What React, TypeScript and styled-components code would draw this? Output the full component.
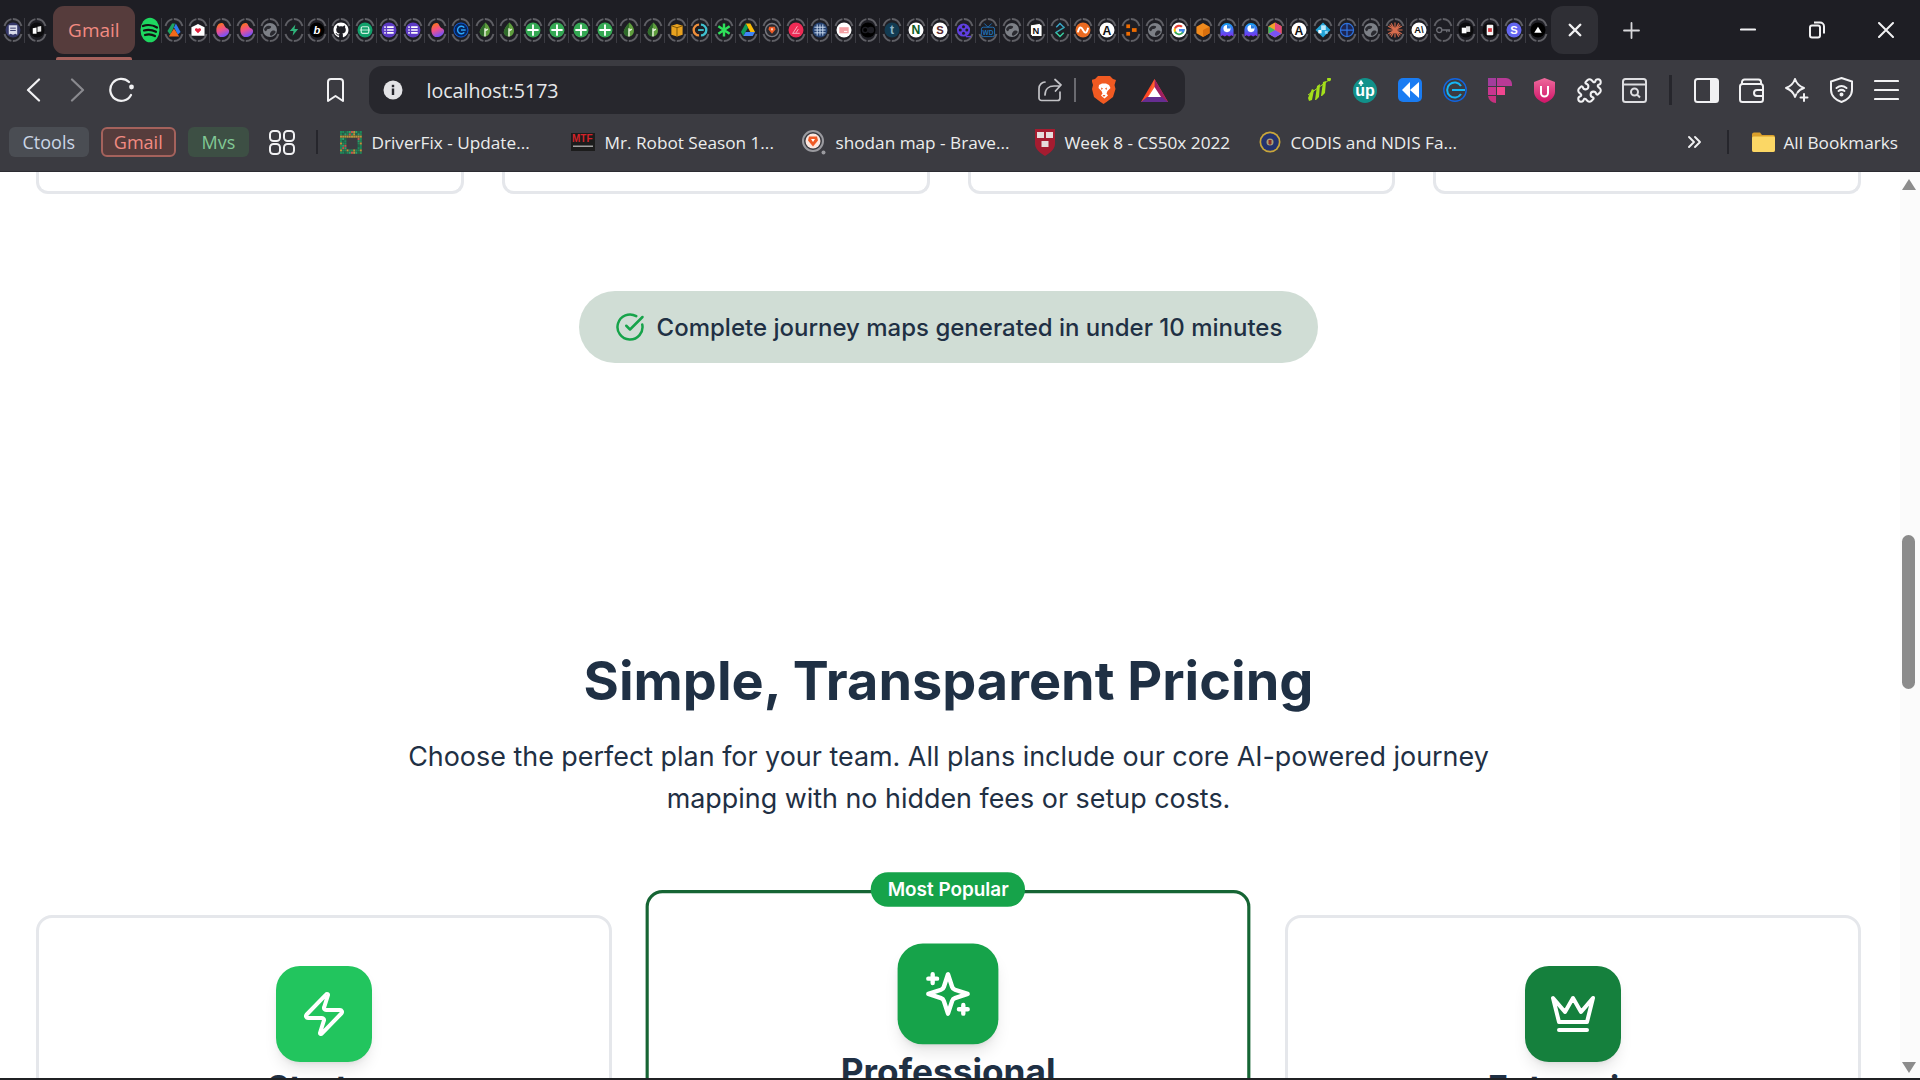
import React from "react";
import styled, { createGlobalStyle } from "styled-components";
import { Zap, CircleCheckBig, Puzzle } from "lucide-react";

const Global = createGlobalStyle`
  html, body { margin: 0; padding: 0; overflow: hidden; background: #fff; }
  #root { width: 1920px; height: 1080px; }
  * { box-sizing: border-box; }
`;

const Shell = styled.div`
  width: 1920px;
  height: 1080px;
  display: flex;
  flex-direction: column;
  overflow: hidden;
  font-family: "Open Sans", "Noto Sans", sans-serif;
`;

/* ---------- tab strip ---------- */
const TabStrip = styled.div`
  height: 60px;
  flex: none;
  display: flex;
  align-items: flex-start;
  padding-left: 1px;
  background: #1e1e24;
`;
const TabSlot = styled.div<{ $sep: boolean }>`
  position: relative;
  width: 23.94px;
  height: 60px;
  flex: none;
  display: flex;
  align-items: center;
  justify-content: center;
  &::after {
    content: "";
    display: ${(p) => (p.$sep ? "block" : "none")};
    position: absolute;
    right: 0;
    top: 18px;
    width: 1px;
    height: 25px;
    background: #3b3b42;
  }
`;
const ActiveTab = styled.div`
  position: relative;
  width: 82px;
  height: 48px;
  margin: 6px 3px 0 4px;
  flex: none;
  display: flex;
  align-items: center;
  justify-content: center;
  border-radius: 11px;
  background: #563c3c;
  color: #f28b82;
  font-size: 19px;
  font-weight: 500;
  &::after {
    content: "";
    position: absolute;
    left: 3px;
    right: 3px;
    bottom: -6px;
    height: 3px;
    border-radius: 2px 2px 0 0;
    background: #a5625c;
  }
`;
const CloseTab = styled.div`
  width: 47px;
  height: 48px;
  margin: 6px 0 0 1px;
  flex: none;
  display: flex;
  align-items: center;
  justify-content: center;
  border-radius: 12px;
  background: #2f2f35;
`;
const NewTab = styled.div`
  width: 24px;
  height: 60px;
  margin-left: 21px;
  display: flex;
  align-items: center;
  justify-content: center;
`;
const WindowControls = styled.div`
  margin-left: auto;
  display: flex;
`;
const WindowButton = styled.div`
  width: 69px;
  height: 60px;
  display: flex;
  align-items: center;
  justify-content: center;
`;

/* ---------- toolbar ---------- */
const Toolbar = styled.div`
  height: 60px;
  flex: none;
  display: flex;
  align-items: center;
  padding-left: 11px;
  background: #3b3b41;
`;
const ToolButton = styled.div<{ $w?: number; $ml?: number }>`
  width: ${(p) => p.$w ?? 45}px;
  height: 48px;
  margin-left: ${(p) => p.$ml ?? 0}px;
  flex: none;
  display: flex;
  align-items: center;
  justify-content: center;
`;
const Address = styled.div`
  width: 816px;
  height: 48px;
  margin-left: 12px;
  flex: none;
  display: flex;
  align-items: center;
  padding: 0 17px 0 14px;
  border-radius: 13px;
  background: #27272d;
`;
const UrlText = styled.span`
  margin-left: 23.5px;
  color: #e6e7ea;
  font-size: 19.6px;
`;
const AddressEnd = styled.div`
  margin-left: auto;
  display: flex;
  align-items: center;
`;
const ThinRule = styled.div<{ $h: number; $c: string; $w?: number }>`
  width: ${(p) => p.$w ?? 2}px;
  height: ${(p) => p.$h}px;
  flex: none;
  background: ${(p) => p.$c};
`;
const RuleBox = styled.div<{ $w?: number }>`
  width: ${(p) => p.$w ?? 25}px;
  display: flex;
  justify-content: center;
  flex: none;
`;

/* ---------- bookmarks ---------- */
const BookmarksBar = styled.div`
  height: 52px;
  flex: none;
  display: flex;
  align-items: center;
  padding: 0 0 7px 9px;
  border-bottom: 1px solid #2c2c32;
  background: #3b3b41;
  color: #eceded;
  font-size: 17.2px;
`;
const Chip = styled.div<{ $w: number; $bg: string; $fg: string; $line?: string }>`
  width: ${(p) => p.$w}px;
  height: 30px;
  margin-right: 12.5px;
  flex: none;
  display: flex;
  align-items: center;
  justify-content: center;
  border-radius: 6px;
  border: ${(p) => (p.$line ? `2px solid ${p.$line}` : "none")};
  background: ${(p) => p.$bg};
  color: ${(p) => p.$fg};
  font-size: 18px;
  font-weight: 500;
`;
const AppsButton = styled.div`
  width: 26px;
  margin-left: 7px;
  display: flex;
  flex: none;
`;
const BarRuleA = styled.div`
  margin-left: 21px;
  margin-right: 22px;
  flex: none;
  display: flex;
`;
const BookmarkItem = styled.div<{ $w: number }>`
  width: ${(p) => p.$w}px;
  flex: none;
  display: flex;
  align-items: center;
  gap: 10px;
  white-space: nowrap;
`;
const BarEnd = styled.div`
  margin-left: auto;
  padding-right: 22px;
  display: flex;
  align-items: center;
`;
const MoreButton = styled.div`
  color: #eceded;
  width: 20px;
  display: flex;
  justify-content: center;
  margin-right: 23px;
`;
const AllMarks = styled.div`
  margin-left: 23px;
  display: flex;
  align-items: center;
  gap: 8px;
`;

/* ---------- page ---------- */
const Page = styled.div`
  flex: 1;
  min-height: 0;
  display: flex;
  background: #fff;
`;
const Content = styled.main`
  flex: 1;
  min-width: 0;
  padding: 0 39px 0 36px;
  overflow: hidden;
  display: flex;
  flex-direction: column;
  align-items: center;
  font-family: Inter, "Liberation Sans", sans-serif;
  color: #1f3044;
`;
const FeatureRow = styled.div`
  width: 100%;
  flex: none;
  display: grid;
  grid-template-columns: repeat(4, 1fr);
  gap: 38px;
`;
const FeatureStub = styled.div`
  height: 22px;
  border: 3px solid #e5e7eb;
  border-top: none;
  border-radius: 0 0 12px 12px;
`;
const Pill = styled.div`
  height: 72px;
  margin-top: 97px;
  padding: 0 36px;
  flex: none;
  display: flex;
  align-items: center;
  gap: 12px;
  border-radius: 36px;
  background: #d0ddd5;
  font-size: 24px;
  font-weight: 500;
  color: #1f3044;
  white-space: nowrap;
`;
const Heading = styled.h2`
  margin: 285px 0 0;
  font-size: 54px;
  line-height: 65px;
  font-weight: 700;
  color: #1f3044;
  flex: none;
`;
const Lead = styled.p`
  margin: 22px 0 0;
  width: 1130px;
  text-align: center;
  font-size: 26.9px;
  line-height: 42px;
  font-weight: 400;
  color: #1f3044;
  flex: none;
`;
const PlanGrid = styled.div`
  width: 100%;
  margin-top: 96px;
  flex: none;
  display: grid;
  grid-template-columns: repeat(3, 1fr);
  gap: 48px;
`;
const PlanCard = styled.article<{ $featured?: boolean }>`
  position: relative;
  height: 1000px;
  padding-top: 48px;
  display: flex;
  flex-direction: column;
  align-items: center;
  border-radius: 16px;
  border: ${(p) => (p.$featured ? "3px solid #166534" : "3px solid #e5e7eb")};
  background: #fff;
  transform: ${(p) => (p.$featured ? "scale(1.05)" : "none")};
`;
const PlanIcon = styled.div<{ $bg: string }>`
  width: 96px;
  height: 96px;
  flex: none;
  display: flex;
  align-items: center;
  justify-content: center;
  border-radius: 24px;
  background: ${(p) => p.$bg};
  box-shadow: 0 10px 15px -3px rgba(0, 0, 0, 0.1), 0 4px 6px -4px rgba(0, 0, 0, 0.1);
`;
const PlanName = styled.h3`
  margin: 6px 0 0;
  font-size: 33.6px;
  line-height: 40px;
  font-weight: 700;
  color: #1f3044;
`;
const Badge = styled.div`
  position: absolute;
  top: -20px;
  left: 50%;
  transform: translateX(-50%);
  height: 33px;
  padding: 0 16px;
  display: flex;
  align-items: center;
  border-radius: 17px;
  background: #16a34a;
  color: #fff;
  font-size: 18px;
  font-weight: 600;
  white-space: nowrap;
`;
const Scrollbar = styled.aside`
  width: 20px;
  flex: none;
  display: flex;
  flex-direction: column;
  align-items: center;
  padding: 7px 3px 5px 0;
  background: #fbfbfb;
`;
const Thumb = styled.div`
  width: 13px;
  height: 154px;
  margin-top: 345px;
  border-radius: 7px;
  background: #8b8b8b;
`;
const ScrollEnd = styled.div`
  margin-top: auto;
  display: flex;
`;
const BottomEdge = styled.div`
  height: 2px;
  flex: none;
  background: #202124;
`;

/* ---------- favicons (16×16 drawings) ---------- */
const letter = (t: string, fill: string, size = 11, y = 12) => (
  <text x="8" y={y} textAnchor="middle" fontSize={size} fontWeight="700" fontFamily="Liberation Sans, sans-serif" fill={fill}>
    {t}
  </text>
);

const blob = (id: string) => (
  <>
    <defs>
      <linearGradient id={id} x1="0" y1="0" x2="0.4" y2="1">
        <stop offset="0" stopColor="#ff7a00" />
        <stop offset="0.55" stopColor="#f0508c" />
        <stop offset="1" stopColor="#7a52f4" />
      </linearGradient>
    </defs>
    <path d="M2 8C2 3 5 0 8 .5c2.5.4 2.6 4.6 5 5.5 2 .7 3 2 2.5 4-.6 3-4 5.6-8 5.5C4 15.500 2 12 2 8Z" fill={`url(#${id})`} />
  </>
);
const globe = (
  <>
    <circle cx="8" cy="8" r="7.500" fill="#7d8087" />
    <path d="M3 5c2-2 5-2 6-1s-1 3-3 3-1 3-3 2-1-3 0-4Zm7 4c2-1 4 0 4 1s-3 4-5 4-1-4 1-5Z" fill="#2a2a30" />
  </>
);
const leaf = (
  <>
    <path d="M8.500 0C13 4 14 8 13 11c-.7 2.500-3 4-5 4s-5-1.500-5.500-4C2 8 5 4 8.500 0Z" fill="#5f9e3d" />
    <path d="M8.500 0C5 4 2 8 2.500 11c.5 2 2 3.500 4 3.900Z" fill="#2f6b2b" />
    <path d="M8 15V6M8 9l3-2" stroke="#e8f2e0" strokeWidth="1.500" fill="none" />
  </>
);
const plus = (
  <>
    <circle cx="8" cy="8" r="8" fill="#34a853" />
    <path d="M8 2v12M2 8h12" stroke="#fff" strokeWidth="2" />
  </>
);
const purpleList = (
  <>
    <circle cx="8" cy="8" r="8" fill="#5d3bc4" />
    <path d="M6 5h7M6 8h7M6 11h7" stroke="#fff" strokeWidth="1.800" />
    <path d="M3 5h1.500M3 8h1.500M3 11h1.500" stroke="#fff" strokeWidth="1.800" />
  </>
);
const ghost = (id: string) => (
  <>
    <defs>
      <linearGradient id={id} x1="0" y1="0" x2="0" y2="1">
        <stop offset="0" stopColor="#12a5f4" />
        <stop offset="1" stopColor="#7a2ff0" />
      </linearGradient>
    </defs>
    <path d="M1 7.500a7 7 0 0 1 14 0V15l-2.300-1.500L10.300 15 8 13.500 5.700 15l-2.400-1.500L1 15Z" fill={`url(#${id})`} />
    <circle cx="8" cy="6.500" r="3.800" fill="#fff" />
    <path d="M8 6.500V2.700A3.800 3.800 0 0 1 11.800 6.500Z" fill="#2a7ee0" />
  </>
);
const whiteA = (
  <>
    <circle cx="8" cy="8" r="8" fill="#fff" />
    {letter("A", "#111", 13, 13)}
  </>
);

const FAVICONS: Record<string, (i: number) => React.ReactNode> = {
  note: () => (
    <>
      <circle cx="8" cy="8" r="8" fill="#35386a" />
      <path d="M3.500 3h9v10l-2-1-2.500 1-2.500-1-2 1Z" fill="#d9dbea" />
      <path d="M5 6h6M5 8.500h6" stroke="#35386a" />
    </>
  ),
  cards: () => (
    <>
      <circle cx="8" cy="8" r="8" fill="#0b0b0d" />
      <path d="M3.500 6l4-.7V12h-4Z" fill="#fff" />
      <path d="M8.500 4.500l4-.7V9.500l-4 .7Z" fill="#e8e8e8" />
    </>
  ),
  tri: () => (
    <>
      <path d="M1 9 6 1h3l-2 6-3 6Z" fill="#1fa463" />
      <path d="M10 1l5 9-3 3-4-8Z" fill="#2f7cf0" />
      <path d="M8 6.500 13.500 15h-11Z" fill="#f26a1b" />
    </>
  ),
  mail: () => (
    <>
      <path d="M1 5 8 1.500 15 5v9H1Z" fill="#fff" />
      <path d="M8 11.500 4.800 8.300a1.800 1.800 0 0 1 3.200-1.500 1.800 1.800 0 0 1 3.200 1.500Z" fill="#e0213d" />
    </>
  ),
  blob: (i) => blob(`bl${i}`),
  globe: () => globe,
  bolt: () => (
    <>
      <circle cx="8" cy="8" r="8" fill="#1e1e24" />
      <path d="M9.500 2 3.500 9h4l-1 5 6-7h-4Z" fill="#2fb37a" />
    </>
  ),
  b: () => (
    <>
      <circle cx="8" cy="8" r="8" fill="#000" />
      <text x="8" y="12.500" textAnchor="middle" fontSize="12" fontStyle="italic" fontWeight="700" fontFamily="Liberation Sans, sans-serif" fill="#fff">b</text>
    </>
  ),
  github: () => (
    <path
      fill="#fff"
      d="M8 0C3.580 0 0 3.580 0 8c0 3.540 2.290 6.530 5.470 7.590.4.070.55-.17.55-.38 0-.19-.01-.82-.01-1.490-2.010.37-2.530-.49-2.690-.94-.09-.23-.48-.94-.82-1.130-.28-.15-.68-.52-.01-.53.630-.01 1.080.58 1.230.82.720 1.210 1.870.87 2.330.66.070-.52.280-.87.510-1.070-1.780-.2-3.640-.89-3.640-3.950 0-.87.310-1.590.82-2.150-.08-.2-.36-1.020.08-2.120 0 0 .67-.21 2.200.82.640-.18 1.320-.27 2-.27s1.360.09 2 .27c1.530-1.040 2.200-.82 2.200-.82.440 1.100.160 1.920.08 2.120.51.560.82 1.270.82 2.150 0 3.070-1.870 3.750-3.650 3.950.29.250.54.730.54 1.480 0 1.070-.01 1.930-.01 2.200 0 .21.150.46.55.38A8.013 8.013 0 0 0 16 8c0-4.420-3.580-8-8-8Z"
    />
  ),
  teal: () => (
    <>
      <circle cx="8" cy="8" r="8" fill="#12a06b" />
      <rect x="4" y="4.500" width="8" height="7" rx="1.500" fill="none" stroke="#cdeee0" strokeWidth="1.300" />
      <path d="M2.500 8h11" stroke="#cdeee0" />
    </>
  ),
  list: () => purpleList,
  blueC: () => (
    <>
      <circle cx="8" cy="8" r="7.500" fill="#06245c" stroke="#0f62e6" />
      <path d="M11.500 5.500a4 4 0 1 0 0 5" fill="none" stroke="#2aa8ff" strokeWidth="1.500" />
      <path d="M8 8h5" stroke="#2aa8ff" strokeWidth="1.500" />
    </>
  ),
  leaf: () => leaf,
  plus: () => plus,
  box: () => (
    <>
      <path d="M2 3.500 8 1.500l6 2V13l-6 2-6-2Z" fill="#e9a21f" />
      <path d="M2 3.500 8 5.500l6-2M8 5.500V15" stroke="#7a5408" fill="none" />
    </>
  ),
  c2: () => (
    <>
      <path d="M7 1a7 7 0 0 0 0 14v-2.500a4.500 4.500 0 0 1 0-9Z" fill="#ef8f3a" />
      <path d="M9 1a7 7 0 0 1 0 14v-2.500a4.500 4.500 0 0 0 0-9Z" fill="#3fc0cf" />
      <path d="M6 8h6" stroke="#3fc0cf" strokeWidth="2" />
    </>
  ),
  star: () => <path d="M8 1v14M2 4l12 8M14 4 2 12" stroke="#2fe05a" strokeWidth="2.600" />,
  drive: () => (
    <>
      <path d="M5.500 1h5l5 9h-5Z" fill="#fbbc04" />
      <path d="M5.500 1 .5 10l2.500 4.500L8 5.500Z" fill="#0f9d58" />
      <path d="M3 14.500h10l2.500-4.500h-10Z" fill="#4285f4" />
    </>
  ),
  brave: () => (
    <>
      <circle cx="8" cy="8" r="7" fill="#2a2a30" stroke="#7b7b82" strokeWidth="1.500" />
      <path d="M5 4.500h6l.8 3L8 12 4.200 7.500Z" fill="#ef5a25" />
      <path d="M6.800 6.500h2.400L8 9Z" fill="#fff" />
    </>
  ),
  red: () => (
    <>
      <circle cx="8" cy="8" r="8" fill="#ee2b55" />
      <path d="M4 11.500h8M5 11 9.500 4M8 11l2.500-4" stroke="#f7b6c5" fill="none" />
    </>
  ),
  grid: () => (
    <>
      <circle cx="8" cy="8" r="8" fill="#24406f" />
      <path d="M2 5h12M2 8h12M2 11h12M5 2v12M8 2v12M11 2v12" stroke="#cfe0f5" strokeWidth="1" />
    </>
  ),
  whitecard: () => (
    <>
      <circle cx="8" cy="8" r="8" fill="#fff" />
      <rect x="3" y="5" width="10" height="6.500" fill="#f3a0a4" />
      <path d="M8 9.500h3.500" stroke="#fff" />
    </>
  ),
  co: () => (
    <>
      <circle cx="8" cy="8" r="8" fill="#000" />
      <circle cx="5" cy="8" r="2.800" fill="none" stroke="#1e1e24" strokeWidth="1.400" />
      <circle cx="11" cy="8" r="3.500" fill="#1e1e24" />
    </>
  ),
  t: () => (
    <>
      <circle cx="8" cy="8" r="8" fill="#123b52" />
      {letter("t", "#8fb4c7", 13, 12.500)}
    </>
  ),
  N: () => (
    <>
      <circle cx="8" cy="8" r="8" fill="#fff" />
      {letter("N", "#0d5c24", 13, 12.700)}
    </>
  ),
  S: () => (
    <>
      <circle cx="8" cy="8" r="8" fill="#fff" />
      {letter("S", "#5a2a30", 12, 12.200)}
    </>
  ),
  reel: () => (
    <>
      <circle cx="7.500" cy="8" r="7" fill="#5f3fe0" />
      <circle cx="7.500" cy="4.500" r="1.600" fill="#1e1e24" />
      <circle cx="7.500" cy="11.500" r="1.600" fill="#1e1e24" />
      <circle cx="4" cy="8" r="1.600" fill="#1e1e24" />
      <circle cx="11" cy="8" r="1.600" fill="#1e1e24" />
      <path d="M10 15h5.500" stroke="#5f3fe0" strokeWidth="1.500" />
    </>
  ),
  wd: () => (
    <>
      <path d="M4 1l4 4 4-4" stroke="#1f6fb5" fill="none" />
      <rect x="1" y="5" width="14" height="10" rx="2" fill="none" stroke="#1f6fb5" />
      {letter("WD", "#1f6fb5", 7, 13)}
    </>
  ),
  notion: () => (
    <>
      <path d="M2 2.500 11.500 1 14.500 3v12H4L2 12.500Z" fill="#fff" stroke="#111" />
      {letter("N", "#111", 10, 12.500)}
    </>
  ),
  sarrows: () => (
    <>
      <path d="M4 5l4-4 4 4" fill="none" stroke="#3aa7c9" strokeWidth="1.500" />
      <path d="M3 11 13 5" stroke="#38a8b8" strokeWidth="1.500" />
      <path d="M4 11l4 4 4-4" fill="none" stroke="#3ad0a0" strokeWidth="1.500" />
    </>
  ),
  wave: () => (
    <>
      <circle cx="8" cy="8" r="8" fill="#ea6a21" />
      <path d="M2.500 10.500C4 4 6 4 8 8s4 4 5.500-2.500" fill="none" stroke="#fff" strokeWidth="2" />
    </>
  ),
  A: () => whiteA,
  dots: () => (
    <>
      <rect x="3" y="2" width="4" height="4" fill="#ef6c00" />
      <rect x="3" y="10" width="4" height="4" fill="#ef6c00" />
      <rect x="9" y="6" width="5" height="4" fill="#ef6c00" />
    </>
  ),
  google: () => (
    <>
      <circle cx="8" cy="8" r="8" fill="#fff" />
      <path d="M8 7v2.200h3.400A3.500 3.500 0 0 1 4.700 9L2.800 10.400A6 6 0 0 0 14 8c0-.4 0-.7-.1-1Z" fill="#34a853" />
      <path d="M2.800 5.500a6 6 0 0 0 0 5L4.700 9a3.500 3.500 0 0 1 0-2Z" fill="#fbbc05" />
      <path d="M2.800 5.500 4.700 7A3.500 3.500 0 0 1 10.300 5.400L12 3.800A6 6 0 0 0 2.800 5.500Z" fill="#ea4335" />
      <path d="M8 7h5.900c.2 1.500-.2 3.100-1.300 4.200L11 10a3 3 0 0 0 .4-.8H8Z" fill="#4285f4" />
    </>
  ),
  cube: () => (
    <>
      <path d="M8 .5 15 4.500v7L8 15.500 1 11.500v-7Z" fill="#f08a1d" />
      <path d="M8 8l7-3.500v7L8 15.500Z" fill="#d96f0d" />
    </>
  ),
  ghost: (i) => ghost(`gh${i}`),
  rainbow: () => (
    <>
      <path d="M8 0 15 4v8l-7 4-7-4V4Z" fill="#f1a02c" />
      <path d="M8 0 15 4v8L8 8Z" fill="#e2487f" />
      <path d="M1 12 8 8l7 4-7 4Z" fill="#7a52f4" />
      <path d="M1 4 8 8 1 12Z" fill="#39b56a" />
    </>
  ),
  diamond: () => (
    <>
      <path d="M8 0l8 8-8 8-8-8Z" fill="#23a4d8" />
      <rect x="6" y="3" width="5" height="5" fill="#bfe9fb" />
      <rect x="3" y="8" width="3.500" height="3.500" fill="#fff" />
      <rect x="10" y="9" width="3" height="3" fill="#8fd6f5" />
    </>
  ),
  bluegrid: () => (
    <>
      <circle cx="8" cy="8" r="7" fill="#1d2550" stroke="#2f73e0" strokeWidth="1.300" />
      <path d="M8 1v14M1 8h14" stroke="#2f73e0" strokeWidth="1.300" />
    </>
  ),
  burst: () => (
    <path
      d="M8 0v16M0 8h16M2.300 2.300l11.400 11.400M13.700 2.300 2.300 13.700M4 .8l8 14.400M12 .8 4 15.200M.8 4l14.400 8M15.200 4 .8 12"
      stroke="#d76c4d"
      strokeWidth="1.200"
    />
  ),
  ai: () => (
    <>
      <circle cx="8" cy="8" r="8" fill="#fff" />
      {letter("A\\", "#111", 10, 11.700)}
    </>
  ),
  key: () => (
    <>
      <circle cx="4" cy="8" r="2.700" fill="none" stroke="#6e6f76" strokeWidth="1.400" />
      <path d="M7 8h8.500M12 8v2.500M14.500 8v2" stroke="#6e6f76" strokeWidth="1.400" fill="none" />
    </>
  ),
  darkcards: () => (
    <>
      <circle cx="8" cy="8" r="8" fill="#0b0b0d" />
      <rect x="3.500" y="5.500" width="5" height="6" fill="#fff" />
      <rect x="8" y="4" width="4.500" height="6" fill="#dcdcdc" />
    </>
  ),
  doc: () => (
    <>
      <circle cx="8" cy="8" r="8" fill="#0b0b0d" />
      <rect x="4.500" y="2.500" width="7" height="11" rx="1" fill="#f5f5f5" />
      <rect x="6" y="6" width="4" height="4" fill="#d7353e" />
    </>
  ),
  purpleS: () => (
    <>
      <circle cx="8" cy="8" r="8" fill="#6366f1" />
      {letter("S", "#fff", 12, 12.300)}
    </>
  ),
  triangle: () => (
    <>
      <circle cx="8" cy="8" r="8" fill="#000" />
      <path d="M8 4.500 12 11H4Z" fill="#fff" />
    </>
  ),
};

const TABS = [
  "tri", "mail", "blob", "blob", "globe", "bolt", "b", "github", "teal", "list", "list", "blob", "blueC",
  "leaf", "leaf", "plus", "plus", "plus", "plus", "leaf", "leaf", "box", "c2", "star", "drive", "brave", "red",
  "grid", "whitecard", "co", "t", "N", "S", "reel", "wd", "globe", "notion", "sarrows", "wave", "A", "dots",
  "globe", "google", "cube", "ghost", "ghost", "rainbow", "A", "diamond", "bluegrid", "globe", "burst", "ai",
  "key", "darkcards", "doc", "purpleS", "triangle",
];

const PinnedFavicon = ({ kind, index }: { kind: string; index: number }) => (
  <svg width="24" height="28" viewBox="0 0 24 28">
    <path d="M3.500 10A9 10.500 0 0 1 20.500 10" fill="none" stroke="#5f5f65" strokeWidth="2" strokeDasharray="10 1.500 12" />
    <path d="M3.500 18A9 10.500 0 0 0 20.500 18" fill="none" stroke="#5f5f65" strokeWidth="2" strokeDasharray="10 1.500 12" />
    <g transform="translate(4.500 6.500) scale(0.94)">{FAVICONS[kind](index)}</g>
  </svg>
);

const Spotify = () => (
  <svg width="20" height="26" viewBox="0 0 20 26">
    <ellipse cx="10" cy="13" rx="9.500" ry="12.300" fill="#1ed760" />
    <path d="M3 9c4-1.500 10-1 14 1.500M4 13.500c4-1.200 8-.8 12 1.300M5 18c3-1 7-.7 10 1" fill="none" stroke="#121212" strokeWidth="2.200" strokeLinecap="round" />
  </svg>
);

const BraveLion = ({ w, h }: { w: number; h: number }) => (
  <svg width={w} height={h} viewBox="0 0 24 28">
    <path d="M6 0h12l3 3 3 1-1.500 5 1 4-2.500 8-6.500 5-3 2-3-2-6.500-5L0 13l1-4L-.5 4l3.500-1Z" fill="#f15a22" />
    <path d="M7 9l3-1.500h4l3 1.500 1.500 3-3 3-1 2.500 1.500 2-3.500 3-3.500-3 1.500-2-1-2.500-3-3Z" fill="#fff" />
    <path d="M9 11.500l2 1-1.500 1.500ZM15 11.500l-2 1 1.500 1.500ZM10.500 19h3L12 21Z" fill="#f15a22" />
  </svg>
);

const BatLogo = () => (
  <svg width="27" height="23" viewBox="0 0 27 23">
    <path d="M13.500 0 0 23h27Z" fill="#ff4724" />
    <path d="M13.500 0 27 23H13.500Z" fill="#9e1f63" />
    <path d="M0 23 6 18h15l6 5Z" fill="#662d91" />
    <path d="M13.500 8 20 18H7Z" fill="#fff" />
    <path d="M13.500 0v8L7 18Z" fill="#ff7a3c" opacity="0.6" />
  </svg>
);

const Stroke = ({ w, h, vb, d, c = "#f1f1f3", sw = 2.2 }: { w: number; h: number; vb: string; d: string; c?: string; sw?: number }) => (
  <svg width={w} height={h} viewBox={vb} fill="none" stroke={c} strokeWidth={sw} strokeLinecap="round" strokeLinejoin="round">
    <path d={d} />
  </svg>
);

const DriverFixIcon = () => {
  const cols = ["#1d8a5a", "#2aa36b", "#1a6b4a", "#1d8a5a", "#2aa36b", "#1a6b4a", "#b9963b", "#1d8a5a", "#c4564c"];
  const cells: React.ReactNode[] = [];
  for (let y = 0; y < 10; y++)
    for (let x = 0; x < 10; x++) {
      const inner = x > 2 && x < 8 && y > 2 && y < 8;
      if (inner) continue;
      const c = cols[(x * 7 + y * 3 + x * y) % 9];
      cells.push(<rect key={`${x}-${y}`} x={x * 2.2} y={y * 2.3} width="2" height="2.100" fill={c} />);
    }
  return (
    <svg width="22" height="23" viewBox="0 0 22 23">
      {cells}
    </svg>
  );
};

const RobotIcon = () => (
  <svg width="24" height="18" viewBox="0 0 24 18">
    <rect width="24" height="18" fill="#1c1c1c" />
    <text x="1" y="9" fontSize="10" fontWeight="700" fontFamily="Liberation Sans, sans-serif" fill="#d2232a">MTF</text>
    <rect x="2" y="12.500" width="20" height="1.500" fill="#a0a0a0" />
  </svg>
);

const ShodanIcon = () => (
  <svg width="24" height="25" viewBox="0 0 24 25">
    <circle cx="11" cy="11" r="10" fill="#3b3b41" stroke="#9a9a9f" strokeWidth="2" />
    <circle cx="11" cy="11" r="7.500" fill="#fbe7df" />
    <path d="M7 6.500h8l1 4-5 6-5-6Z" fill="#ef5a25" />
    <path d="M9 9h4l-2 3Z" fill="#fff" />
    <circle cx="21.500" cy="22.500" r="2" fill="#9a9a9f" />
  </svg>
);

const HarvardIcon = () => (
  <svg width="20" height="27" viewBox="0 0 20 27">
    <path d="M0 0h20v15c0 5-5 9-10 12C5 24 0 20 0 15Z" fill="#a51c30" />
    <rect x="2" y="3" width="7" height="6" fill="#e6dcdc" />
    <rect x="11" y="3" width="7" height="6" fill="#e6dcdc" />
    <rect x="6.500" y="12" width="7" height="6" fill="#e6dcdc" />
  </svg>
);

const FbiIcon = () => (
  <svg width="22" height="22" viewBox="0 0 22 22">
    <circle cx="11" cy="11" r="10.500" fill="#c9a63a" />
    <circle cx="11" cy="11" r="8.800" fill="#25336e" />
    <circle cx="11" cy="11" r="3.500" fill="#a9a377" />
    <path d="M9.500 9h3v3.500L11 14l-1.500-1.500Z" fill="#8a2b2b" />
  </svg>
);

const FolderIcon = () => (
  <svg width="23" height="20" viewBox="0 0 23 20">
    <path d="M0 2.500A2 2 0 0 1 2 .5h6l2 2.500h11a2 2 0 0 1 2 2V18a2 2 0 0 1-2 2H2a2 2 0 0 1-2-2Z" fill="#d99f2b" />
    <path d="M0 6a1.500 1.500 0 0 1 1.500-1.500h20A1.500 1.500 0 0 1 23 6v12a2 2 0 0 1-2 2H2a2 2 0 0 1-2-2Z" fill="#fbd765" />
  </svg>
);

const SparklesOld = () => (
  <svg width="50" height="50" viewBox="0 0 24 24" fill="none" stroke="#fff" strokeWidth="2" strokeLinecap="round" strokeLinejoin="round">
    <path d="m12 3-1.912 5.813a2 2 0 0 1-1.275 1.275L3 12l5.813 1.912a2 2 0 0 1 1.275 1.275L12 21l1.912-5.813a2 2 0 0 1 1.275-1.275L21 12l-5.813-1.912a2 2 0 0 1-1.275-1.275L12 3Z" />
    <path d="M5 3v4M19 17v4M3 5h4M17 19h4" />
  </svg>
);

const CrownOld = () => (
  <svg width="48" height="48" viewBox="0 0 24 24" fill="none" stroke="#fff" strokeWidth="2" strokeLinecap="round" strokeLinejoin="round">
    <path d="m2 4 3 12h14l3-12-6 7-4-7-4 7-6-7zm3 16h14" />
  </svg>
);

export default function App() {
  return (
    <Shell>
      <Global />
      <TabStrip>
        <TabSlot $sep>
          <PinnedFavicon kind="note" index={100} />
        </TabSlot>
        <TabSlot $sep={false}>
          <PinnedFavicon kind="cards" index={101} />
        </TabSlot>
        <ActiveTab>Gmail</ActiveTab>
        <TabSlot $sep>
          <Spotify />
        </TabSlot>
        {TABS.map((kind, i) => (
          <TabSlot key={i} $sep={i < TABS.length - 1}>
            <PinnedFavicon kind={kind} index={i} />
          </TabSlot>
        ))}
        <CloseTab>
          <Stroke w={14} h={14} vb="0 0 16 16" d="M2 2l12 12M14 2 2 14" sw={2.8} />
        </CloseTab>
        <NewTab>
          <Stroke w={17} h={17} vb="0 0 17 17" d="M8.500 1v15M1 8.500h15" c="#d8d8db" sw={1.8} />
        </NewTab>
        <WindowControls>
          <WindowButton>
            <Stroke w={16} h={4} vb="0 0 16 4" d="M1 1.500h14" />
          </WindowButton>
          <WindowButton>
            <svg width="16" height="18" viewBox="0 0 16 18" fill="none" stroke="#f1f1f3" strokeWidth="2">
              <rect x="1" y="4.500" width="10" height="12" rx="2" />
              <path d="M5 1.500h6a4 4 0 0 1 4 4v7" />
            </svg>
          </WindowButton>
          <WindowButton>
            <Stroke w={16} h={16} vb="0 0 16 16" d="M1 1l14 14M15 1 1 15" sw={2} />
          </WindowButton>
        </WindowControls>
      </TabStrip>

      <Toolbar>
        <ToolButton $w={44.5}>
          <Stroke w={15} h={24} vb="0 0 15 24" d="M13 1.500 2 12l11 10.500" sw={2.2} />
        </ToolButton>
        <ToolButton $w={44.5}>
          <Stroke w={15} h={24} vb="0 0 15 24" d="M2 1.500 13 12 2 22.500" c="#8a8a8f" sw={2.2} />
        </ToolButton>
        <ToolButton $w={44.5}>
          <svg width="26" height="26" viewBox="0 0 26 26" fill="none" stroke="#f1f1f3" strokeWidth="2.200" strokeLinecap="round">
            <path d="M22 18a11 11 0 1 1-2-13" />
            <circle cx="22.500" cy="10" r="2.400" fill="#f1f1f3" stroke="none" />
          </svg>
        </ToolButton>
        <ToolButton $w={44} $ml={168.5}>
          <Stroke w={19} h={25} vb="0 0 19 25" d="M2 4a3 3 0 0 1 3-3h9a3 3 0 0 1 3 3v19l-7.500-5L2 23Z" sw={2} />
        </ToolButton>
        <Address>
          <svg width="20" height="20" viewBox="0 0 20 20">
            <circle cx="10" cy="10" r="9.500" fill="#e3e3e6" />
            <rect x="8.800" y="8.500" width="2.400" height="6.500" fill="#27272d" />
            <rect x="8.800" y="4.800" width="2.400" height="2.400" fill="#27272d" />
          </svg>
          <UrlText>localhost:5173</UrlText>
          <AddressEnd>
            <Stroke w={24} h={24} vb="0 0 24 24" d="M22 14v6a2.500 2.500 0 0 1-2.500 2.500h-16A2.500 2.500 0 0 1 1 20V10.500C1 7 4 4 7 4M7 17c0-6 4-9 9-9h6M17 1.500 23 7l-5.500 6" c="#c3c3c7" sw={1.7} />
            <RuleBox>
              <ThinRule $h={24} $c="#6a6a70" />
            </RuleBox>
            <ToolButton $w={24} $ml={5}>
              <BraveLion w={24} h={28} />
            </ToolButton>
            <ToolButton $w={27} $ml={25}>
              <BatLogo />
            </ToolButton>
          </AddressEnd>
        </Address>

        <ToolButton $ml={112}>
          <svg width="25" height="25" viewBox="0 0 25 25" fill="#a4e01a">
            <path d="M1 20 5 11l2 1-2 10-3 1ZM8 22 10 8l3-2-1 13-3 3ZM14 18 16 4l3-1-1 12-3 3ZM21 3a2 2 0 1 1 3-2 2 2 0 0 1-3 2Z" />
            <path d="M1 17 22 2" stroke="#a4e01a" strokeWidth="1" />
          </svg>
        </ToolButton>
        <ToolButton>
          <svg width="24" height="25" viewBox="0 0 24 25">
            <ellipse cx="12" cy="12.500" rx="12" ry="12.500" fill="#11918a" />
            <text x="12" y="18" textAnchor="middle" fontSize="16" fontWeight="700" fontFamily="Liberation Sans, sans-serif" fill="#fff">up</text>
            <path d="M8 8V4M6 6l2-3 2 3" stroke="#fff" strokeWidth="1.500" fill="none" />
          </svg>
        </ToolButton>
        <ToolButton>
          <svg width="24" height="24" viewBox="0 0 24 24">
            <rect width="24" height="24" rx="5" fill="#1a7cf2" />
            <path d="M12 4v16L4 12ZM21 4v16L12 12Z" fill="#fff" />
          </svg>
        </ToolButton>
        <ToolButton>
          <svg width="24" height="24" viewBox="0 0 24 24" fill="none">
            <circle cx="12" cy="12" r="11.200" stroke="#1265e0" strokeWidth="1.400" />
            <path d="M18 8a7.500 7.500 0 1 0 0 8M9 12h13" stroke="#16b6f5" strokeWidth="2" />
          </svg>
        </ToolButton>
        <ToolButton>
          <svg width="24" height="25" viewBox="0 0 24 25">
            <rect x="0" y="0" width="8" height="8" fill="#a33d9c" />
            <rect x="0" y="9" width="8" height="8" fill="#c9368f" />
            <path d="M0 18h8v7a8 8 0 0 1-8-7Z" fill="#c7317f" />
            <path d="M9 0h9a6 6 0 0 1 6 6v2H9Z" fill="#b83a96" />
            <rect x="9" y="9" width="8" height="8" fill="#f0468f" />
          </svg>
        </ToolButton>
        <ToolButton>
          <svg width="21" height="25" viewBox="0 0 21 25">
            <defs>
              <linearGradient id="ushield" x1="0" y1="0" x2="0" y2="1">
                <stop offset="0" stopColor="#ee6a9c" />
                <stop offset="1" stopColor="#cf1468" />
              </linearGradient>
            </defs>
            <path d="M10.500 0 21 4v10c0 5-5 9-10.500 11C5 23 0 19 0 14V4Z" fill="url(#ushield)" />
            <path d="M7 8v7a3.500 3.500 0 0 0 7 0V8" fill="none" stroke="#fff" strokeWidth="2" />
          </svg>
        </ToolButton>
        <ToolButton>
          <Puzzle size={27} color="#f1f1f3" strokeWidth={1.8} />
        </ToolButton>
        <ToolButton>
          <svg width="25" height="25" viewBox="0 0 25 25" fill="none" stroke="#dedee1" strokeWidth="2">
            <rect x="1" y="1" width="23" height="23" rx="2.500" />
            <path d="M1 6.500h23" />
            <circle cx="12.500" cy="14" r="3.500" />
            <path d="M15 16.500l3 3" />
          </svg>
        </ToolButton>
        <RuleBox $w={27}>
          <ThinRule $h={30} $c="#26262c" $w={3} />
        </RuleBox>
        <ToolButton>
          <svg width="25" height="25" viewBox="0 0 25 25" fill="none" stroke="#f1f1f3" strokeWidth="2">
            <rect x="1" y="1" width="23" height="23" rx="2.500" />
            <rect x="16" y="1" width="8" height="23" fill="#f1f1f3" stroke="none" />
          </svg>
        </ToolButton>
        <ToolButton>
          <svg width="25" height="25" viewBox="0 0 25 25" fill="none" stroke="#f1f1f3" strokeWidth="2">
            <path d="M3 6V4a2.500 2.500 0 0 1 2.500-2.500h14A2.500 2.500 0 0 1 22 4v2" />
            <rect x="1" y="6" width="23" height="18" rx="2.500" />
            <path d="M24 12h-6a3 3 0 0 0 0 6h6" />
          </svg>
        </ToolButton>
        <ToolButton>
          <svg width="26" height="26" viewBox="0 0 26 26" fill="none" stroke="#f1f1f3" strokeWidth="2" strokeLinejoin="round" strokeLinecap="round">
            <path d="M11 2c1.500 4.500 3.500 7 9 9-3 1-5 2-6.500 4.500M11 2C9.500 6.500 7.500 9 2 11c5.500 2 7.500 4.500 9 9 .4-1 .8-2 1.300-2.800" />
            <path d="M20 17v7M16.500 20.500h7" />
          </svg>
        </ToolButton>
        <ToolButton>
          <svg width="23" height="26" viewBox="0 0 23 26" fill="none" stroke="#f1f1f3" strokeWidth="2" strokeLinecap="round">
            <path d="M11.500 1 22 4.500V13c0 6-5 10.500-10.500 12C6 23.500 1 19 1 13V4.500Z" />
            <path d="M6.500 11c3-2.500 7-2.500 10 0M8.500 14c2-1.500 4-1.500 6 0" />
            <circle cx="11.500" cy="17.500" r="1" fill="#f1f1f3" />
          </svg>
        </ToolButton>
        <ToolButton>
          <Stroke w={25} h={22} vb="0 0 25 22" d="M1 2h23M1 11h23M1 20h23" sw={2.2} />
        </ToolButton>
      </Toolbar>

      <BookmarksBar>
        <Chip $w={79.5} $bg="#4a4d53" $fg="#cbd6e6">Ctools</Chip>
        <Chip $w={74.5} $bg="#563c3c" $fg="#f28b82" $line="#a5625c">Gmail</Chip>
        <Chip $w={61} $bg="#3d4f44" $fg="#81c995">Mvs</Chip>
        <AppsButton>
          <svg width="26" height="25" viewBox="0 0 26 25" fill="none" stroke="#f1f1f3" strokeWidth="2">
            <rect x="1" y="1" width="10" height="10" rx="3.500" />
            <rect x="15" y="1" width="10" height="10" rx="3.500" />
            <rect x="1" y="14" width="10" height="10" rx="3.500" />
            <rect x="15" y="14" width="10" height="10" rx="3.500" />
          </svg>
        </AppsButton>
        <BarRuleA>
          <ThinRule $h={24} $c="#26262c" />
        </BarRuleA>
        <BookmarkItem $w={231}>
          <DriverFixIcon />
          DriverFix - Update...
        </BookmarkItem>
        <BookmarkItem $w={231}>
          <RobotIcon />
          Mr. Robot Season 1...
        </BookmarkItem>
        <BookmarkItem $w={233}>
          <ShodanIcon />
          shodan map - Brave...
        </BookmarkItem>
        <BookmarkItem $w={224}>
          <HarvardIcon />
          Week 8 - CS50x 2022
        </BookmarkItem>
        <BookmarkItem $w={200}>
          <FbiIcon />
          CODIS and NDIS Fa...
        </BookmarkItem>
        <BarEnd>
          <MoreButton>
            <Stroke w={15} h={14} vb="0 0 15 14" d="M2 2l5 5-5 5M8 2l5 5-5 5" sw={1.9} />
          </MoreButton>
          <ThinRule $h={24} $c="#26262c" />
          <AllMarks>
            <FolderIcon />
            All Bookmarks
          </AllMarks>
        </BarEnd>
      </BookmarksBar>

      <Page>
        <Content>
          <FeatureRow>
            <FeatureStub />
            <FeatureStub />
            <FeatureStub />
            <FeatureStub />
          </FeatureRow>
          <Pill>
            <CircleCheckBig size={30} color="#16a34a" strokeWidth={2} />
            Complete journey maps generated in under 10 minutes
          </Pill>
          <Heading>Simple, Transparent Pricing</Heading>
          <Lead>
            Choose the perfect plan for your team. All plans include our core AI-powered journey mapping with no hidden
            fees or setup costs.
          </Lead>
          <PlanGrid>
            <PlanCard>
              <PlanIcon $bg="#22c55e">
                <Zap size={48} color="#fff" strokeWidth={2} />
              </PlanIcon>
              <PlanName>Starter</PlanName>
            </PlanCard>
            <PlanCard $featured>
              <Badge>Most Popular</Badge>
              <PlanIcon $bg="#16a34a">
                <SparklesOld />
              </PlanIcon>
              <PlanName>Professional</PlanName>
            </PlanCard>
            <PlanCard>
              <PlanIcon $bg="#15803d">
                <CrownOld />
              </PlanIcon>
              <PlanName>Enterprise</PlanName>
            </PlanCard>
          </PlanGrid>
        </Content>
        <Scrollbar>
          <svg width="14" height="11" viewBox="0 0 14 11">
            <path d="M7 0l7 11H0Z" fill="#8b8b8b" />
          </svg>
          <Thumb />
          <ScrollEnd>
            <svg width="14" height="11" viewBox="0 0 14 11">
              <path d="M7 11 14 0H0Z" fill="#8b8b8b" />
            </svg>
          </ScrollEnd>
        </Scrollbar>
      </Page>
      <BottomEdge />
    </Shell>
  );
}
